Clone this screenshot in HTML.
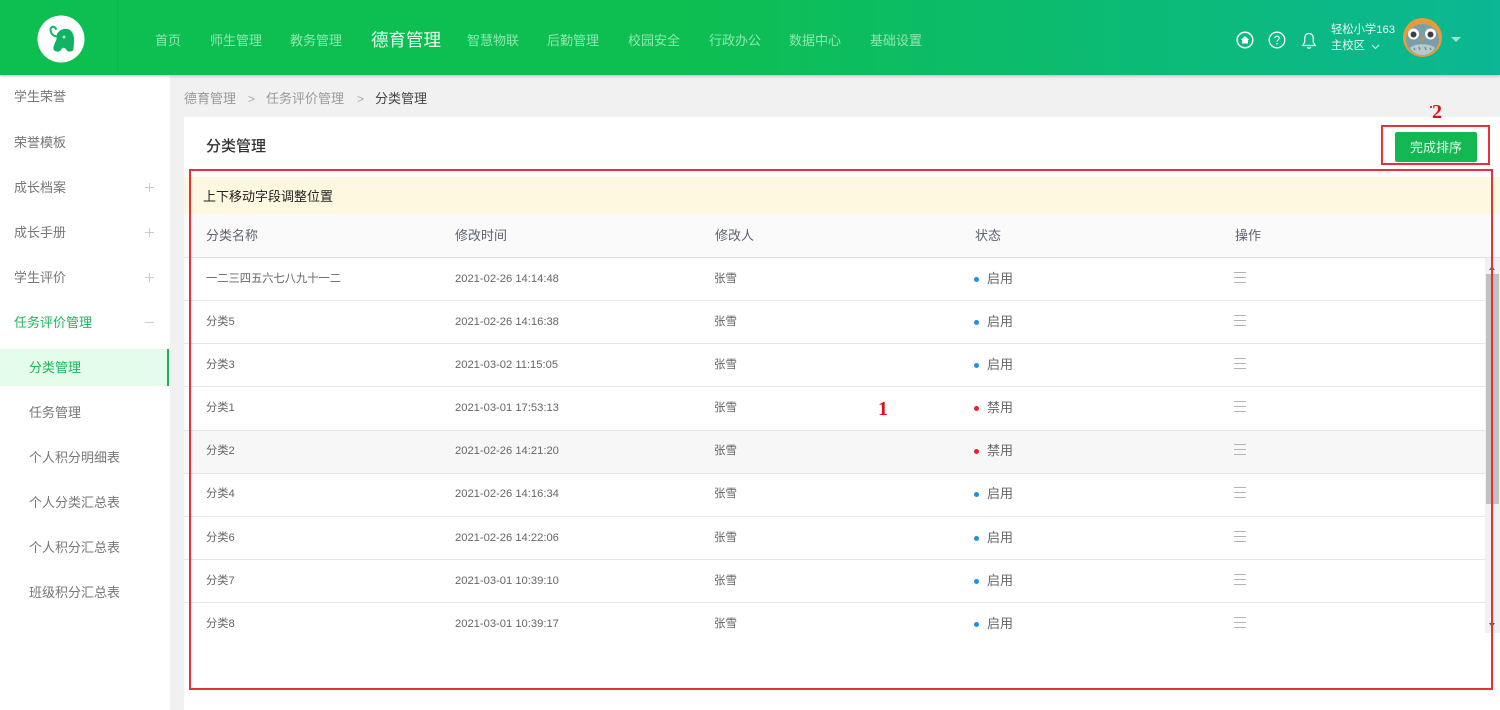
<!DOCTYPE html>
<html lang="zh-CN">
<head>
<meta charset="utf-8">
<title>分类管理</title>
<style>
*{margin:0;padding:0;box-sizing:border-box}
html,body{width:1500px;height:710px;overflow:hidden;background:#f1f1f2;font-family:"Liberation Sans","Noto Sans CJK SC",sans-serif;color:#666}
#wrap{position:absolute;left:0;top:0;width:1500px;height:710px;filter:blur(.3px)}
.a{position:absolute;white-space:nowrap}
#top{position:absolute;left:0;top:0;width:1500px;height:75px;background:linear-gradient(90deg,#0dbf50 0%,#0dbf50 45%,#0bb794 100%);box-shadow:0 1px 3px rgba(0,0,0,.25);z-index:3}
#top .n{position:absolute;top:33px;font-size:13px;line-height:15px;color:#8fe8b0;white-space:nowrap}
#side{position:absolute;left:0;top:75px;width:170px;height:635px;background:#fff}
#side .m{position:absolute;left:14px;font-size:13px;line-height:16px;color:#777;white-space:nowrap}
#side .s{left:29px}
#side .p{position:absolute;left:145px;width:9px;height:9px}
#side .p:before{content:"";position:absolute;left:0;top:4px;width:9px;height:1px;background:#ccc}
#side .p.plus:after{content:"";position:absolute;left:4px;top:0;width:1px;height:9px;background:#ccc}
#card{position:absolute;left:184px;top:117px;width:1316px;height:593px;background:#fff}
.row{position:absolute;left:184px;width:1302px;height:43px;border-bottom:1px solid #e6e6e6;background:#fff}
.row span{position:absolute;top:14px;font-size:11.25px;line-height:15px;color:#666;white-space:nowrap}
.row .t{left:271px;font-size:11.2px}
.row .u{left:530px;font-size:11.5px}
.row .st{left:803px;top:13px;font-size:13px}
.row .d{position:absolute;left:790px;top:19px;width:5px;height:5px;border-radius:50%;background:#1f8fe0}
.row .d.r{background:#ed1c2e}
.row .h{position:absolute;left:1050px;top:14px;width:12px;height:11px;border-top:1px solid #b4b4b4;border-bottom:1px solid #b4b4b4}
.row .h:after{content:"";position:absolute;left:0;top:4px;width:12px;height:1px;background:#b4b4b4}
.row.e span{top:13px}
.row.e .st{top:12px}
.row.e .d{top:18px}
.row.e .h{top:13px}
.th{position:absolute;top:228px;font-size:13px;line-height:16px;color:#5d6470;white-space:nowrap}
.red{position:absolute;border:2px solid #e8303a;z-index:2}
.num{position:absolute;font-family:"Liberation Serif","Noto Serif CJK SC",serif;font-weight:bold;color:#d8101c;font-size:20px;line-height:22px;z-index:2}
</style>
</head>
<body>
<div id="wrap">

<div id="top">
  <div class="a" style="left:117px;top:0;width:1px;height:75px;background:#1aae52"></div>
  <svg class="a" style="left:37px;top:15px" width="48" height="48" viewBox="0 0 48 48">
    <circle cx="24" cy="24" r="23.500" fill="#fff"/>
    <path d="M19 14C17.500 10.500 13 11.500 13.500 15 14 18.500 16 21.500 21 21.500" fill="none" stroke="#14b866" stroke-width="2" stroke-linecap="round"/>
    <path d="M20 19C23 14 29 12.500 33 15 37 18 37.500 24 37 28L36.500 34C36 37 31 37.500 29.500 35 28 32 25 32 24 35 22.500 37.500 17 37 16.500 34 16 30 19 27 19.500 24z" fill="#11b264"/>
    <circle cx="27" cy="22" r="1.500" fill="#b5edcf"/>
  </svg>
  <div class="n" style="left:155px">首页</div>
  <div class="n" style="left:210px">师生管理</div>
  <div class="n" style="left:290px">教务管理</div>
  <div class="n" style="left:371px;top:30px;font-size:17.500px;line-height:20px;color:#e8fff0">德育管理</div>
  <div class="n" style="left:467px">智慧物联</div>
  <div class="n" style="left:547px">后勤管理</div>
  <div class="n" style="left:628px">校园安全</div>
  <div class="n" style="left:709px">行政办公</div>
  <div class="n" style="left:789px">数据中心</div>
  <div class="n" style="left:870px">基础设置</div>

  <svg class="a" style="left:1236px;top:31px" width="18" height="18" viewBox="0 0 18 18">
    <circle cx="9" cy="9" r="7.800" fill="none" stroke="#fff" stroke-width="1.500"/>
    <path d="M4.800 9 9 5l4.200 4h-1.200v3.500H6V9z" fill="#fff"/>
  </svg>
  <svg class="a" style="left:1268px;top:31px" width="18" height="18" viewBox="0 0 18 18">
    <circle cx="9" cy="9" r="7.800" fill="none" stroke="#fff" stroke-width="1.300"/>
    <path d="M6.800 7.200C6.800 4.500 11.200 4.500 11.200 7.200 11.200 8.800 9 8.800 9 10.600" fill="none" stroke="#fff" stroke-width="1.100"/>
    <circle cx="9" cy="12.800" r=".8" fill="#fff"/>
  </svg>
  <svg class="a" style="left:1301px;top:32px" width="16" height="18" viewBox="0 0 16 18">
    <path d="M8 1.500c-3 0-4.300 2.300-4.300 5v3.700L1.800 13.500h12.400l-1.900-3.300V6.500C12.300 3.800 11 1.500 8 1.500z" fill="none" stroke="#fff" stroke-width="1.200"/>
    <path d="M6.300 15.200c.6 1.300 2.800 1.300 3.400 0" fill="none" stroke="#fff" stroke-width="1.200"/>
  </svg>
  <div class="a" style="left:1331px;top:23px;font-size:11.300px;line-height:14px;color:#e6fbf4">轻松小学163</div>
  <div class="a" style="left:1331px;top:39px;font-size:11.300px;line-height:14px;color:#e6fbf4">主校区</div>
  <svg class="a" style="left:1371px;top:44px" width="9" height="6" viewBox="0 0 9 6"><path d="M1 1l3.500 3.500L8 1" fill="none" stroke="#d5f5ea" stroke-width="1"/></svg>
  <svg class="a" style="left:1403px;top:18px" width="39" height="39" viewBox="0 0 39 39">
    <circle cx="19.500" cy="19.500" r="19.500" fill="#eb9a3a"/>
    <ellipse cx="19.500" cy="21.500" rx="16.500" ry="15.500" fill="#7b9fa8"/>
    <path d="M7 30c4-5 21-5 25 0-3 5-8 7-12.500 7S10 35 7 30z" fill="#b8c9cc"/>
    <circle cx="10.500" cy="16" r="5.500" fill="#fff"/><circle cx="27.500" cy="16" r="5.500" fill="#fff"/>
    <circle cx="10.500" cy="16.500" r="3" fill="#3f3f46"/><circle cx="27.500" cy="16.500" r="3" fill="#3f3f46"/>
    <path d="M17.500 19h4l-2 5z" fill="#d98a48"/>
    <path d="M11 30l1 2M16 29l1 3M22 29l1 3M27 30l1 2" stroke="#6d93a5" stroke-width="1.500"/>
  </svg>
  <div class="a" style="left:1451px;top:37px;width:0;height:0;border-left:5px solid transparent;border-right:5px solid transparent;border-top:5px solid #9fe3d0"></div>
</div>

<div id="side">
  <div class="m" style="top:14px">学生荣誉</div>
  <div class="m" style="top:60px">荣誉模板</div>
  <div class="m" style="top:105px">成长档案</div><div class="p plus" style="top:108px"></div>
  <div class="m" style="top:150px">成长手册</div><div class="p plus" style="top:153px"></div>
  <div class="m" style="top:195px">学生评价</div><div class="p plus" style="top:198px"></div>
  <div class="m" style="top:240px;color:#1fb45c">任务评价管理</div><div class="p" style="top:243px"></div>
  <div class="a" style="left:0;top:274px;width:169px;height:37px;background:#e4fdea;border-right:2px solid #1fae5a"></div>
  <div class="m s" style="top:285px;color:#1fb45c">分类管理</div>
  <div class="m s" style="top:330px">任务管理</div>
  <div class="m s" style="top:375px">个人积分明细表</div>
  <div class="m s" style="top:420px">个人分类汇总表</div>
  <div class="m s" style="top:465px">个人积分汇总表</div>
  <div class="m s" style="top:510px">班级积分汇总表</div>
</div>

<div class="a" style="left:184px;top:91px;font-size:13px;line-height:16px;color:#999">德育管理</div>
<div class="a" style="left:248px;top:91px;font-size:12px;line-height:16px;color:#aaa">&gt;</div>
<div class="a" style="left:266px;top:91px;font-size:13px;line-height:16px;color:#999">任务评价管理</div>
<div class="a" style="left:357px;top:91px;font-size:12px;line-height:16px;color:#aaa">&gt;</div>
<div class="a" style="left:375px;top:91px;font-size:13px;line-height:16px;color:#444">分类管理</div>

<div id="card"></div>
<div class="a" style="left:206px;top:137px;font-size:15px;line-height:19px;color:#333;font-weight:500">分类管理</div>
<div class="a" style="left:1395px;top:132px;width:82px;height:30px;background:#14b852;border-radius:2px;color:#e8fff0;font-size:13px;line-height:31px;text-align:center">完成排序</div>

<div class="a" style="left:184px;top:177px;width:1316px;height:37px;background:#fff8e0"></div>
<div class="a" style="left:203px;top:189px;font-size:13px;line-height:16px;color:#222">上下移动字段调整位置</div>

<div class="a" style="left:184px;top:214px;width:1316px;height:44px;background:#fafafa;border-bottom:1px solid #e2e2e2"></div>
<div class="th" style="left:206px">分类名称</div>
<div class="th" style="left:455px">修改时间</div>
<div class="th" style="left:715px">修改人</div>
<div class="th" style="left:975px">状态</div>
<div class="th" style="left:1235px">操作</div>

<div class="row" style="top:258px"><span style="left:22px">一二三四五六七八九十一二</span><span class="t">2021-02-26 14:14:48</span><span class="u">张雪</span><i class="d"></i><span class="st">启用</span><i class="h"></i></div>
<div class="row" style="top:301px"><span style="left:22px">分类5</span><span class="t">2021-02-26 14:16:38</span><span class="u">张雪</span><i class="d"></i><span class="st">启用</span><i class="h"></i></div>
<div class="row" style="top:344px"><span style="left:22px">分类3</span><span class="t">2021-03-02 11:15:05</span><span class="u">张雪</span><i class="d"></i><span class="st">启用</span><i class="h"></i></div>
<div class="row" style="top:387px;height:44px"><span style="left:22px">分类1</span><span class="t">2021-03-01 17:53:13</span><span class="u">张雪</span><i class="d r"></i><span class="st">禁用</span><i class="h"></i></div>
<div class="row e" style="top:431px;background:#f7f7f7"><span style="left:22px">分类2</span><span class="t">2021-02-26 14:21:20</span><span class="u">张雪</span><i class="d r"></i><span class="st">禁用</span><i class="h"></i></div>
<div class="row e" style="top:474px"><span style="left:22px">分类4</span><span class="t">2021-02-26 14:16:34</span><span class="u">张雪</span><i class="d"></i><span class="st">启用</span><i class="h"></i></div>
<div class="row" style="top:517px"><span style="left:22px">分类6</span><span class="t">2021-02-26 14:22:06</span><span class="u">张雪</span><i class="d"></i><span class="st">启用</span><i class="h"></i></div>
<div class="row" style="top:560px"><span style="left:22px">分类7</span><span class="t">2021-03-01 10:39:10</span><span class="u">张雪</span><i class="d"></i><span class="st">启用</span><i class="h"></i></div>
<div class="row" style="top:603px;border-bottom:none"><span style="left:22px">分类8</span><span class="t">2021-03-01 10:39:17</span><span class="u">张雪</span><i class="d"></i><span class="st">启用</span><i class="h"></i></div>

<div class="a" style="left:1485px;top:258px;width:15px;height:375px;background:#f1f1f1"></div>
<div class="a" style="left:1486px;top:274px;width:13px;height:230px;background:#c1c1c1"></div>
<div class="a" style="left:1489px;top:266px;width:0;height:0;border-left:3.500px solid transparent;border-right:3.500px solid transparent;border-bottom:4px solid #666"></div>
<div class="a" style="left:1489px;top:623px;width:0;height:0;border-left:3.500px solid transparent;border-right:3.500px solid transparent;border-top:4px solid #555"></div>

<div class="red" style="left:189px;top:169px;width:1304px;height:521px"></div>
<div class="red" style="left:1381px;top:125px;width:109px;height:40px"></div>
<div class="num" style="left:878px;top:398px">1</div>
<div class="num" style="left:1432px;top:101px">2</div>
<div class="a" style="left:1430px;top:106px;width:2px;height:2px;background:#e8303a;z-index:2"></div>

</div>
</body>
</html>
